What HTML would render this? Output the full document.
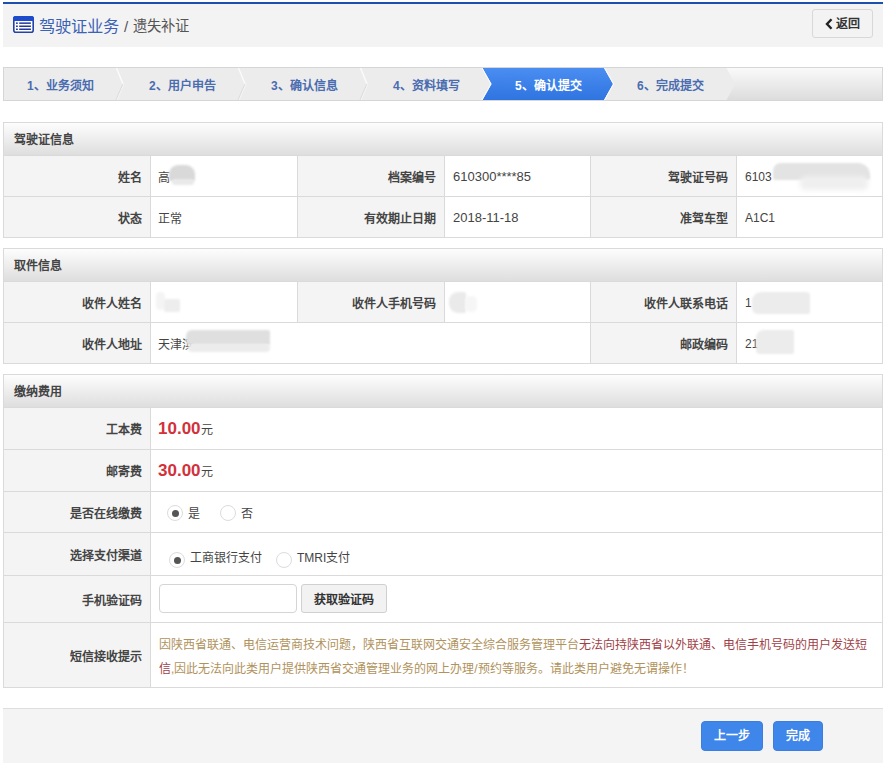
<!DOCTYPE html><html lang="zh-CN"><head><meta charset="utf-8"><style>
*{box-sizing:border-box;margin:0;padding:0}
html,body{width:886px;height:766px;overflow:hidden;background:#fff}
body{font-family:"Liberation Sans",sans-serif;font-size:12px;color:#333;position:relative}
.a{position:absolute;white-space:nowrap}
.hl{position:absolute;height:1px;background:#dadada}
.vl{position:absolute;width:1px;background:#dadada}
.lab{position:absolute;font-weight:bold;color:#444;text-align:right;white-space:nowrap}
.val{position:absolute;white-space:nowrap;color:#444}
.ph{position:absolute;left:4px;width:878px;height:32px;background:linear-gradient(#fdfdfd,#dedede);font-weight:bold;line-height:34px;padding-left:10px;color:#444}
.blob{position:absolute;filter:blur(1.2px);border-radius:5px}
.fee{color:#d2313c;font-weight:bold;font-size:17px}
.radio{width:16px;height:16px;border:1px solid #dcdcdc;border-radius:50%;position:absolute;background:#fff}
.radio.on:after{content:"";position:absolute;left:3.5px;top:3.5px;width:7px;height:7px;border-radius:50%;background:#555}
.gold{color:#b0925c}
.red{color:#9f3f48}
.btn{position:absolute;top:721px;height:30px;border-radius:4px;background:#3f86ea;border:1px solid #3b7de0;color:#fff;font-weight:bold;font-size:12px;text-align:center;line-height:28px}
.stx{position:absolute;top:69px;height:34px;line-height:34px;color:#4a6cb0;font-weight:bold;font-size:12px;white-space:nowrap}
</style></head><body>
<div class="a" style="left:3px;top:2px;width:880px;height:2px;background:#1d4fae"></div>
<div class="a" style="left:3px;top:4px;width:880px;height:43px;background:#f4f3f3"></div>
<svg class="a" style="left:13px;top:16px" width="21" height="17" viewBox="0 0 21 17"><rect x="0.8" y="0.8" width="19.4" height="15.4" rx="2" fill="#fff" stroke="#2142a8" stroke-width="1.6"/><path d="M0 2.5Q0 0 2.5 0H18.5Q21 0 21 2.5V5H0Z" fill="#1e4bcc"/><rect x="3" y="6.4" width="1.8" height="1.5" fill="#24389a"/><rect x="6.2" y="6.4" width="11.7" height="1.5" fill="#24389a"/><rect x="3" y="9.5" width="1.8" height="1.5" fill="#24389a"/><rect x="6.2" y="9.5" width="11.7" height="1.5" fill="#24389a"/><rect x="3" y="12.5" width="1.8" height="1.5" fill="#24389a"/><rect x="6.2" y="12.5" width="11.7" height="1.5" fill="#24389a"/></svg>
<div class="a" style="left:39px;top:16px;font-size:16.3px;line-height:20px;color:#3a62b6">驾驶证业务</div>
<div class="a" style="left:124px;top:16.5px;font-size:15px;line-height:20px;color:#555">/</div>
<div class="a" style="left:133px;top:16px;font-size:14.3px;line-height:20px;color:#555">遗失补证</div>
<div class="a" style="left:812px;top:9px;width:61px;height:29px;border:1px solid #d8d8d8;border-radius:3px;background:#f3f3f3;font-weight:bold;color:#333;line-height:29px;padding-left:23px"><svg style="position:absolute;left:12px;top:8px" width="8" height="12" viewBox="0 0 8 12"><path d="M6.5 1.2L2 6L6.5 10.8" fill="none" stroke="#222" stroke-width="2.4"/></svg>返回</div>
<svg class="a" style="left:0;top:0" width="886" height="110">
<defs>
<linearGradient id="sg" x1="0" y1="0" x2="0" y2="1"><stop offset="0" stop-color="#fafafa"/><stop offset="1" stop-color="#dcdcdc"/></linearGradient>
<linearGradient id="bg" x1="0" y1="0" x2="0" y2="1"><stop offset="0" stop-color="#4a8ef2"/><stop offset="1" stop-color="#2f74e0"/></linearGradient>
</defs>
<rect x="3.5" y="67.5" width="879" height="33" fill="url(#sg)" stroke="#d6d6d6"/>
<polygon points="4,68 726.5,68 735,84 726.5,100 4,100" fill="#ececec"/><polyline points="116.5,68 123,84" fill="none" stroke="#fbfbfb" stroke-width="1.4"/><polyline points="123,84 116,100" fill="none" stroke="#dcdcdc" stroke-width="1.1"/><polyline points="124,84 117,100" fill="none" stroke="#f6f6f6" stroke-width="0.9"/><polyline points="238.5,68 245,84" fill="none" stroke="#fbfbfb" stroke-width="1.4"/><polyline points="245,84 238,100" fill="none" stroke="#dcdcdc" stroke-width="1.1"/><polyline points="246,84 239,100" fill="none" stroke="#f6f6f6" stroke-width="0.9"/><polyline points="360.5,68 367,84" fill="none" stroke="#fbfbfb" stroke-width="1.4"/><polyline points="367,84 360,100" fill="none" stroke="#dcdcdc" stroke-width="1.1"/><polyline points="368,84 361,100" fill="none" stroke="#f6f6f6" stroke-width="0.9"/>
<polygon points="482.5,68 604,68 613,84 604,100 482.5,100 491.5,84" fill="url(#bg)"/>
<polyline points="482,68 491,84 482,100" fill="none" stroke="#fff" stroke-width="1"/>
<polyline points="604.5,68 613.5,84 604.5,100" fill="none" stroke="#fff" stroke-width="1"/>
</svg>
<div class="stx" style="left:27px">1、业务须知</div>
<div class="stx" style="left:149px">2、用户申告</div>
<div class="stx" style="left:271px">3、确认信息</div>
<div class="stx" style="left:393px">4、资料填写</div>
<div class="stx" style="left:515px;color:#fff">5、确认提交</div>
<div class="stx" style="left:637px">6、完成提交</div>
<div class="a" style="left:3px;top:122px;width:880px;height:116px;border:1px solid #dadada;background:#fff"></div>
<div class="ph" style="top:123px">驾驶证信息</div>
<div class="hl" style="left:3px;top:155px;width:880px"></div>
<div class="a" style="left:4px;top:156px;width:146px;height:81px;background:#f4f4f4"></div>
<div class="a" style="left:298px;top:156px;width:146px;height:81px;background:#f4f4f4"></div>
<div class="a" style="left:591px;top:156px;width:145px;height:81px;background:#f4f4f4"></div>
<div class="hl" style="left:3px;top:196px;width:880px"></div>
<div class="vl" style="left:150px;top:156px;height:81px"></div>
<div class="vl" style="left:297px;top:156px;height:81px"></div>
<div class="vl" style="left:444px;top:156px;height:81px"></div>
<div class="vl" style="left:590px;top:156px;height:81px"></div>
<div class="vl" style="left:736px;top:156px;height:81px"></div>
<div class="lab" style="right:744px;top:157.5px;height:40px;line-height:40px">姓名</div>
<div class="val" style="left:158px;top:157.5px;height:40px;line-height:40px;">高</div>
<div class="lab" style="right:450px;top:157.5px;height:40px;line-height:40px">档案编号</div>
<div class="val" style="left:453px;top:156.5px;height:40px;line-height:40px;font-size:13px">610300****85</div>
<div class="lab" style="right:158px;top:157.5px;height:40px;line-height:40px">驾驶证号码</div>
<div class="val" style="left:745px;top:156.5px;height:40px;line-height:40px;">6103</div>
<div class="lab" style="right:744px;top:198.5px;height:40px;line-height:40px">状态</div>
<div class="val" style="left:158px;top:198.5px;height:40px;line-height:40px;">正常</div>
<div class="lab" style="right:450px;top:198.5px;height:40px;line-height:40px">有效期止日期</div>
<div class="val" style="left:453px;top:197.5px;height:40px;line-height:40px;font-size:13px">2018-11-18</div>
<div class="lab" style="right:158px;top:198.5px;height:40px;line-height:40px">准驾车型</div>
<div class="val" style="left:745px;top:197.5px;height:40px;line-height:40px;">A1C1</div>
<div class="a" style="left:3px;top:248px;width:880px;height:116px;border:1px solid #dadada;background:#fff"></div>
<div class="ph" style="top:249px">取件信息</div>
<div class="hl" style="left:3px;top:281px;width:880px"></div>
<div class="a" style="left:4px;top:282px;width:146px;height:81px;background:#f4f4f4"></div>
<div class="a" style="left:298px;top:282px;width:146px;height:81px;background:#f4f4f4"></div>
<div class="a" style="left:591px;top:282px;width:145px;height:81px;background:#f4f4f4"></div>
<div class="hl" style="left:3px;top:322px;width:880px"></div>
<div class="vl" style="left:150px;top:282px;height:40px"></div>
<div class="vl" style="left:297px;top:282px;height:40px"></div>
<div class="vl" style="left:444px;top:282px;height:40px"></div>
<div class="vl" style="left:590px;top:282px;height:40px"></div>
<div class="vl" style="left:736px;top:282px;height:40px"></div>
<div class="vl" style="left:150px;top:323px;height:40px"></div>
<div class="vl" style="left:590px;top:323px;height:40px"></div>
<div class="vl" style="left:736px;top:323px;height:40px"></div>
<div class="a" style="left:298px;top:323px;width:292px;height:40px;background:#fff"></div>
<div class="lab" style="right:744px;top:283.5px;height:40px;line-height:40px">收件人姓名</div>
<div class="lab" style="right:450px;top:283.5px;height:40px;line-height:40px">收件人手机号码</div>
<div class="lab" style="right:158px;top:283.5px;height:40px;line-height:40px">收件人联系电话</div>
<div class="val" style="left:745px;top:282.5px;height:40px;line-height:40px;">1</div>
<div class="lab" style="right:744px;top:324.5px;height:40px;line-height:40px">收件人地址</div>
<div class="val" style="left:158px;top:324.5px;height:40px;line-height:40px;">天津滨</div>
<div class="lab" style="right:158px;top:324.5px;height:40px;line-height:40px">邮政编码</div>
<div class="val" style="left:745px;top:323.5px;height:40px;line-height:40px;">21</div>
<div class="a" style="left:3px;top:374px;width:880px;height:314px;border:1px solid #dadada;background:#fff"></div>
<div class="ph" style="top:375px">缴纳费用</div>
<div class="hl" style="left:3px;top:407px;width:880px"></div>
<div class="a" style="left:4px;top:408px;width:146px;height:279px;background:#f4f4f4"></div>
<div class="hl" style="left:3px;top:449px;width:880px"></div>
<div class="hl" style="left:3px;top:491px;width:880px"></div>
<div class="hl" style="left:3px;top:532px;width:880px"></div>
<div class="hl" style="left:3px;top:575px;width:880px"></div>
<div class="hl" style="left:3px;top:622px;width:880px"></div>
<div class="vl" style="left:150px;top:408px;height:279px"></div>
<div class="lab" style="right:744px;top:409.5px;height:41px;line-height:41px">工本费</div>
<div class="lab" style="right:744px;top:451.5px;height:41px;line-height:41px">邮寄费</div>
<div class="lab" style="right:744px;top:493.5px;height:40px;line-height:40px">是否在线缴费</div>
<div class="lab" style="right:744px;top:534.5px;height:42px;line-height:42px">选择支付渠道</div>
<div class="lab" style="right:744px;top:577.5px;height:46px;line-height:46px">手机验证码</div>
<div class="lab" style="right:744px;top:624.5px;height:64px;line-height:64px">短信接收提示</div>
<div class="val" style="left:158px;top:408px;height:41px;line-height:41px;"><span class="fee">10.00</span>元</div>
<div class="val" style="left:158px;top:450px;height:41px;line-height:41px;"><span class="fee">30.00</span>元</div>
<div class="a" style="left:159px;top:633px;width:720px;line-height:24px;white-space:normal"><span class="gold">因陕西省联通、电信运营商技术问题，陕西省互联网交通安全综合服务管理平台</span><span class="red">无法向持陕西省以外联通、电信手机号码的用户发送短信</span><span class="gold">,因此无法向此类用户提供陕西省交通管理业务的网上办理/预约等服务。请此类用户避免无谓操作！</span></div>
<div class="blob" style="left:169px;top:165px;width:26px;height:16px;background:#d9d9d9;border-radius:9px 9px 2px 2px"></div>
<div class="blob" style="left:172px;top:179px;width:22px;height:6px;background:#e9e9e9;filter:blur(1px)"></div>
<div class="blob" style="left:773px;top:163px;width:97px;height:17px;background:#e3e3e3;border-radius:8px 12px 2px 2px"></div>
<div class="blob" style="left:800px;top:176px;width:68px;height:14px;background:#efefef;filter:blur(2.5px)"></div>
<div class="blob" style="left:156px;top:292px;width:9px;height:18px;background:#f4f4f4;"></div>
<div class="blob" style="left:164px;top:299px;width:16px;height:13px;background:#ededed;border-radius:2px"></div>
<div class="blob" style="left:449px;top:292px;width:17px;height:21px;background:#eaeaea;border-radius:9px 2px 2px 9px"></div>
<div class="blob" style="left:465px;top:296px;width:12px;height:16px;background:#f6f6f6;"></div>
<div class="blob" style="left:752px;top:292px;width:58px;height:22px;background:#ececec;border-radius:9px 4px 2px 6px"></div>
<div class="blob" style="left:186px;top:330px;width:84px;height:15px;background:#dfdfdf;border-radius:6px 2px 0 0"></div>
<div class="blob" style="left:188px;top:344px;width:82px;height:8px;background:#ececec;filter:blur(1px)"></div>
<div class="blob" style="left:756px;top:330px;width:38px;height:24px;background:#ececec;border-radius:8px 2px 2px 4px"></div>
<span class="radio on" style="left:167px;top:505px"></span><span class="a" style="left:188px;top:504px;color:#444">是</span>
<span class="radio" style="left:220px;top:505px"></span><span class="a" style="left:241px;top:504px;color:#444">否</span>
<span class="radio on" style="left:169px;top:552px"></span><span class="a" style="left:190px;top:548px;color:#444">工商银行支付</span>
<span class="radio" style="left:276px;top:552px"></span><span class="a" style="left:297px;top:548px;color:#444">TMRI支付</span>
<div class="a" style="left:159px;top:584px;width:138px;height:29px;border:1px solid #d5d5d5;border-radius:4px;background:#fff"></div>
<div class="a" style="left:301px;top:584px;width:86px;height:29px;border:1px solid #d0d0d0;border-radius:3px;background:#f2f2f2;font-weight:bold;text-align:center;line-height:31px">获取验证码</div>
<div class="a" style="left:3px;top:708px;width:880px;height:55px;background:#f4f4f4;border-top:1px solid #dedede"></div>
<div class="btn" style="left:701px;width:62px">上一步</div>
<div class="btn" style="left:773px;width:50px">完成</div>
</body></html>
